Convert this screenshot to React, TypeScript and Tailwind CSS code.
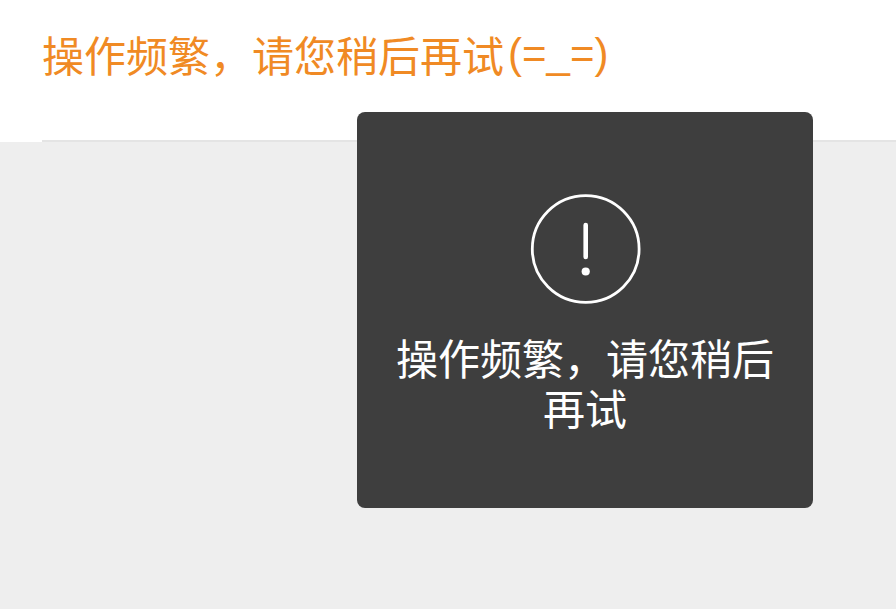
const message = "操作频繁，请您稍后再试";

const Toast = ({ text }: { text: string }) => {
	return (
		<div
			role="alert"
			className="absolute top-28 left-[357px] flex h-[396px] w-[456px] flex-col items-center rounded-lg bg-[#3e3e3e] px-9 pt-[82px] text-white">
			<svg
				viewBox="0 0 112 110"
				className="h-[110px] w-28 shrink-0"
				fill="none"
				stroke="currentColor"
				aria-hidden="true">
				<circle cx="56.7" cy="55" r="53.4" strokeWidth="2.8" />
				<path d="M56.7 31v32" strokeWidth="4.6" strokeLinecap="round" />
				<circle cx="56.7" cy="77.5" r="4.1" fill="currentColor" stroke="none" />
			</svg>
			<p className="mt-7 text-center text-[42px] leading-[50px]">
				{text}
			</p>
		</div>
	);
};

export default function App() {
	return (
		<main className="relative min-h-screen overflow-hidden bg-[#eeeeee] font-['Noto_Sans_CJK_SC',sans-serif]">
			<header className="bg-white pl-[42px]">
				<h1 className="flex items-start gap-1 border-b-2 border-[#e4e4e4] pt-[22px] pb-[54px] text-[42px] leading-16 text-[#f08a24]">
					<span>{message}</span>
					<span className="font-['Liberation_Sans',sans-serif]">(=_=)</span>
				</h1>
			</header>
			<Toast text={message} />
		</main>
	);
}
